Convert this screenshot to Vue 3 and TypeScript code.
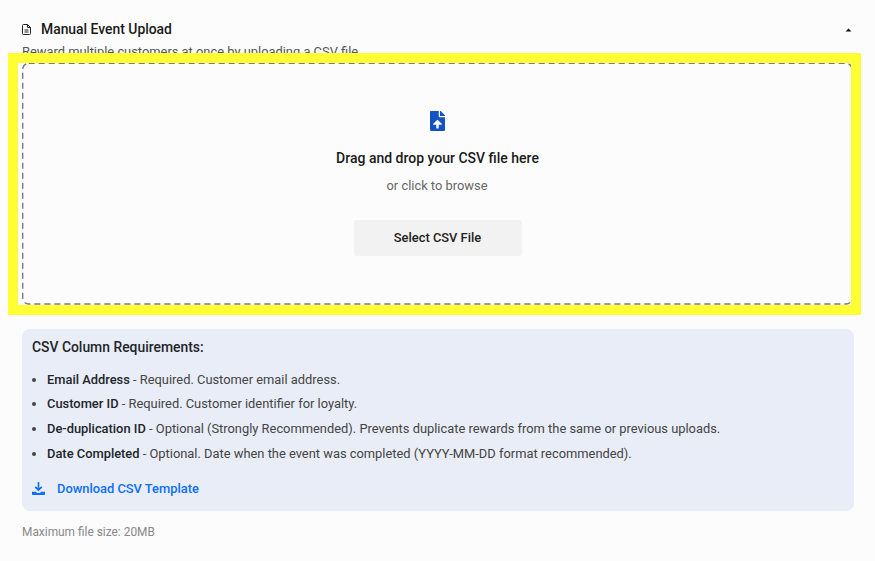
<script setup lang="ts">
interface Req { name: string; text: string }
const reqs: Req[] = [
  { name: 'Email Address', text: ' - Required. Customer email address.' },
  { name: 'Customer ID', text: ' - Required. Customer identifier for loyalty.' },
  { name: 'De-duplication ID', text: ' - Optional (Strongly Recommended). Prevents duplicate rewards from the same or previous uploads.' },
  { name: 'Date Completed', text: ' - Optional. Date when the event was completed (YYYY-MM-DD format recommended).' },
]
</script>

<template>
  <main class="page">
    <header class="head">
      <svg class="doc" viewBox="3 1 18 22" fill="none" stroke="#222" stroke-width="2">
        <path d="M14 2H6a2 2 0 0 0-2 2v16a2 2 0 0 0 2 2h12a2 2 0 0 0 2-2V8z" />
        <path d="M14 2v6h6M8 13h8M8 17h8" />
      </svg>
      <h1 class="title">Manual Event Upload</h1>
      <svg class="caret" viewBox="0 0 10 6"><path d="M5 .6 9.400 5.400H.6z" fill="#111" /></svg>
    </header>
    <p class="sub">Reward multiple customers at once by uploading a CSV file</p>

    <section class="zone">
      <svg class="dash" width="830" height="242" aria-hidden="true">
        <rect x="0.7" y="0.3" width="829.3" height="240.7" rx="6" fill="none" stroke="#7a7a7a" stroke-width="1.4" stroke-dasharray="6 4" />
      </svg>
      <svg class="upload" viewBox="0 0 384 512">
        <path fill="#1254c4" d="M224 136V0H24C10.700 0 0 10.700 0 24v464c0 13.300 10.700 24 24 24h336c13.300 0 24-10.700 24-24V160H248c-13.200 0-24-10.800-24-24zm65.180 216.010H224v80c0 8.840-7.160 16-16 16h-32c-8.840 0-16-7.160-16-16v-80H94.820c-14.280 0-21.410-17.290-11.270-27.360l96.420-95.700c6.650-6.610 17.390-6.610 24.040 0l96.420 95.700c10.150 10.070 3.030 27.360-11.250 27.360zM377 105 279.100 7c-4.500-4.500-10.600-7-17-7H256v128h128v-6.100c0-6.300-2.500-12.400-7-16.900z" />
      </svg>
      <div class="drag">Drag and drop your CSV file here</div>
      <div class="or">or click to browse</div>
      <button class="select" type="button">Select CSV File</button>
    </section>

    <section class="req">
      <h2 class="req-title">CSV Column Requirements:</h2>
      <ul class="list">
        <li v-for="r in reqs" :key="r.name"><strong>{{ r.name }}</strong>{{ r.text }}</li>
      </ul>
      <a class="dl" href="#">
        <svg class="dl-icon" viewBox="0 0 16 16">
          <path fill="none" stroke="#0d6efd" stroke-width="2" d="M8 0v9M4 6l4 4 4-4" />
          <path fill="#0d6efd" d="M0 12h4.500l2 1.500h3l2-1.500H16v3a1 1 0 0 1-1 1H1a1 1 0 0 1-1-1z" />
        </svg>
        Download CSV Template
      </a>
    </section>
    <p class="max">Maximum file size: 20MB</p>

    <div class="highlight" aria-hidden="true"></div>
  </main>
</template>

<style>
html, body { margin: 0; background: #fcfcfd; }
</style>

<style scoped>
.page {
  position: relative;
  box-sizing: border-box;
  width: 875px;
  height: 561px;
  overflow: hidden;
  padding: 21px 22px 0;
  background: #fcfcfd;
  font-family: Roboto, "Liberation Sans", sans-serif;
  font-size: 12.880px;
  color: #212529;
}
.head { display: flex; align-items: center; height: 17px; }
.doc { width: 9px; height: 11px; margin-right: 10px; }
.title { margin: 0; font-size: 13.900px; line-height: 17px; font-weight: 500; color: #1a1a1a; }
.caret { width: 7px; height: 4px; margin-left: auto; margin-right: 1px; }
.sub { margin: 6px 0 0; height: 19px; font-size: 12.880px; line-height: 15px; color: #555; }
.zone {
  position: relative;
  box-sizing: border-box;
  height: 242px;
  width: 830px;
  display: flex;
  flex-direction: column;
  align-items: center;
  padding-top: 48px;
}
.dash { position: absolute; left: 0; top: 0; overflow: visible; }
.upload { width: 15px; height: 20px; }
.drag { margin-top: 19px; margin-left: 1px; font-size: 14px; line-height: 17px; font-weight: 500; color: #1a1a1a; }
.or { margin-top: 11px; font-size: 12.880px; line-height: 15px; color: #666; }
.select {
  margin-top: 27px;
  margin-left: 1px;
  width: 168px;
  height: 36px;
  padding: 0 0 2px;
  border: 0;
  border-radius: 3px;
  background: #f2f2f2;
  font: 500 12.880px Roboto, "Liberation Sans", sans-serif;
  color: #222;
}
.req {
  box-sizing: border-box;
  margin-top: 24px;
  width: 832px;
  height: 182px;
  padding: 10px 10px 0;
  background: #e9edf7;
  border-radius: 8px;
}
.req-title { margin: 0; font-size: 13.900px; line-height: 17px; font-weight: 500; color: #212529; }
.list { margin: 15.700px 0 0; padding: 0 0 0 15px; }
.list li { font-size: 12.880px; line-height: 15px; margin-bottom: 9.700px; color: #444; }
.list strong { font-weight: 500; color: #212529; }
.dl { display: flex; align-items: center; margin-top: 20px; font-size: 12.880px; font-weight: 500; line-height: 15px; color: #0d6efd; text-decoration: none; }
.dl-icon { width: 13px; height: 13px; margin-right: 12px; }
.max { margin: 14px 0 0; font-size: 11.900px; line-height: 14px; color: #888; }
.highlight {
  position: absolute;
  left: 8px;
  top: 53px;
  width: 853px;
  height: 262px;
  box-sizing: border-box;
  border: 10px solid #ffff33;
  pointer-events: none;
}
</style>
